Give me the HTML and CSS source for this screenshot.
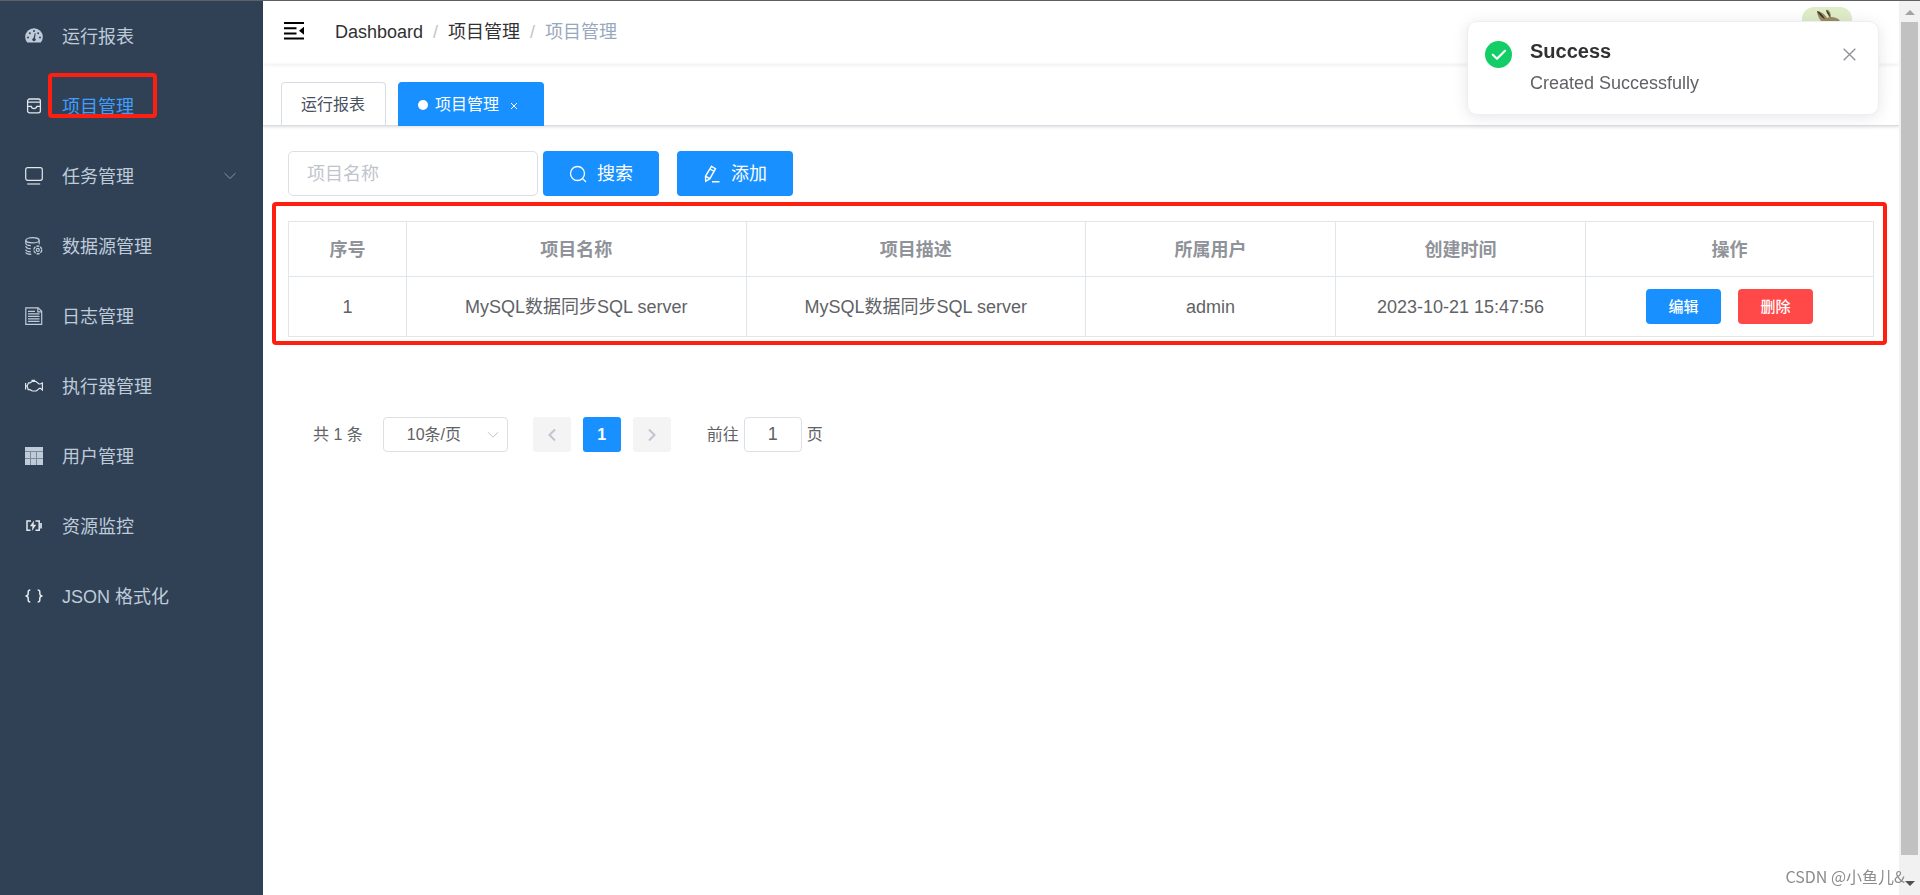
FILE: index.html
```html
<!DOCTYPE html>
<html lang="zh-CN">
<head>
<meta charset="utf-8">
<meta name="viewport" content="width=device-width, initial-scale=1">
<title>项目管理</title>
<link rel="stylesheet" href="styles.css">
</head>
<body>
<div class="app">
  <nav class="sidebar">
    <a class="menu-item" href="#">
      <svg class="menu-icon" viewBox="0 0 18 18"><path d="M2.2 15.500A8.600 8.600 0 0 1 .2 10a8.800 8.800 0 0 1 17.600 0 8.600 8.600 0 0 1-2 5.500z" fill="currentColor"/><g fill="#304156"><circle cx="3" cy="10.500" r="1"/><circle cx="4.800" cy="6.300" r="1"/><circle cx="9" cy="4" r="1"/><circle cx="13.200" cy="6.300" r="1"/><circle cx="15" cy="10.500" r="1"/><circle cx="9" cy="12.600" r="1.700"/><path d="M8.300 12l1.500-6 .9.300-.9 6z"/></g></svg>
      <span>运行报表</span>
    </a>
    <a class="menu-item active" href="#">
      <svg class="menu-icon bright" viewBox="0 0 18 18" fill="none" stroke="currentColor" stroke-width="1.300"><rect x="2.600" y="2" width="12.800" height="13.800" rx="2"/><path d="M2.600 5.200h12.800M2.600 9.300h3.600c.4 1.600 1.200 2.300 2.800 2.300s2.400-.7 2.800-2.300h3.600"/></svg>
      <span>项目管理</span>
      <i class="mark mark-menu"></i>
    </a>
    <a class="menu-item" href="#">
      <svg class="menu-icon bright" viewBox="0 0 18 18" fill="none" stroke="currentColor" stroke-width="1.200"><rect x=".7" y=".7" width="16.600" height="12.600" rx="2"/><path d="M2.200 17h13" stroke="#a2a9b5" stroke-width="1.800"/></svg>
      <span>任务管理</span>
      <svg class="menu-arrow" viewBox="0 0 12 8" fill="none" stroke="currentColor"><path d="M.6 1.200L6 6.500l5.400-5.300"/></svg>
    </a>
    <a class="menu-item" href="#">
      <svg class="menu-icon" viewBox="0 0 18 18" fill="none" stroke="currentColor" stroke-width="1.200"><ellipse cx="7.500" cy="3.300" rx="6.700" ry="2.600"/><path d="M.8 3.300v3c0 1.300 2.200 2.200 5 2.400M14.200 3.300v3.900M.8 9c0 1.700 1.700 2.600 5 2.800M.8 12.400c0 1.300 1.700 2.200 5 2.400M.8 15.200c0 1.300 2.200 2 5.500 2.100"/><circle cx="12.800" cy="12.900" r="3.900" stroke-width="1.400" stroke-dasharray="3.100 1"/><circle cx="12.800" cy="12.900" r="1.500"/></svg>
      <span>数据源管理</span>
    </a>
    <a class="menu-item" href="#">
      <svg class="menu-icon" viewBox="0 0 18 18" fill="none" stroke="currentColor" stroke-width="1.200"><path d="M.8.800h12.400l3.500 3.500v13H.8z"/><path d="M12.800.8v4h3.900M3 4.300h7M3 6.800h11.500M3 9.300h11.500M3 11.800h11.500M3 14.300h11.500"/></svg>
      <span>日志管理</span>
    </a>
    <a class="menu-item" href="#">
      <svg class="menu-icon" viewBox="0 0 18 18" fill="none" stroke="#e3e7ec" stroke-width="1.200"><path d="M.6 6v6.500M.6 9h1.500l1.500-3.200h1.500L7 4.500h4l3 2.500h1.300L17.400 6v7l-2-1.700h-1l-3 2.700H7.200L5 12.700H3.200L2.100 9M6.500 3.400h3.700"/></svg>
      <span>执行器管理</span>
    </a>
    <a class="menu-item" href="#">
      <svg class="menu-icon" viewBox="0 0 18 18"><path d="M0 0h18v18H0z" fill="#7c8a9c"/><path d="M0 0h18v4H0zM0 5h5v6H0zM6 5h5v6H6zM12 5h6v6h-6zM0 12h5v6H0zM6 12h5v6H6zM12 12h6v6h-6z" fill="currentColor"/></svg>
      <span>用户管理</span>
    </a>
    <a class="menu-item" href="#">
      <svg class="menu-icon bright" viewBox="0 0 18 18" fill="none" stroke="currentColor" stroke-width="1.500"><path d="M6 4H2v9.300h3.500M10.500 4h3.700v9.300H10.500"/><path d="M9 3.500L4.900 9.300h2.600l-.6 4.700 4.300-6.200H8.600z" fill="currentColor" stroke="none"/><path d="M16 6v5.500" stroke-width="2" stroke="#bfcbd9"/></svg>
      <span>资源监控</span>
    </a>
    <a class="menu-item" href="#">
      <svg class="menu-icon bright" viewBox="0 0 18 18" fill="none" stroke="currentColor" stroke-width="1.500"><path d="M5.300 3C3.500 3 3.200 3.700 3.200 5v1.800C3.200 8 2.300 8.800.6 9c1.700.2 2.600 1 2.600 2.200V13c0 1.300.3 2 2.100 2M12.700 3c1.800 0 2.100.7 2.100 2v1.800c0 1.200.9 2 2.600 2.200-1.700.2-2.600 1-2.600 2.200V13c0 1.300-.3 2-2.100 2"/></svg>
      <span>JSON 格式化</span>
    </a>
  </nav>

  <div class="main">
    <header class="navbar">
      <button class="hamburger" type="button" aria-label="收起菜单">
        <svg viewBox="0 0 20 18"><path d="M0 0h20v2H0zM0 5.200h12.500v2H0zM0 10.400h12.500v2H0zM0 15.600h20v2H0zM20 4.800v8L15 8.800z"/></svg>
      </button>
      <ol class="breadcrumb">
        <li><a href="#">Dashboard</a></li>
        <li><a href="#">项目管理</a></li>
        <li>项目管理</li>
      </ol>
      <svg class="avatar" viewBox="0 0 50 50"><rect width="50" height="50" rx="12" fill="#dfecc8"/><path d="M15 4c3 0 8 3 10 7l2-1L24 3c3-1 5 3 5 7 4 0 7 1 9 4v16H22V17c-4-3-7-9-7-13z" fill="#9a8b62"/><path d="M15 4c3 1 6 4 8 8l-2-1c-3-2-5-5-6-7zM24 3c2 1 4 4 4 7l-3-4z" fill="#3b342c"/></svg>
    </header>

    <div class="tabs">
      <a class="tab" href="#">运行报表</a>
      <a class="tab current" href="#"><i class="dot"></i>项目管理<svg class="tab-close" viewBox="0 0 8 8" stroke="currentColor"><path d="M1 1l6 6M7 1L1 7"/></svg></a>
    </div>

    <main class="content">
      <form class="filter">
        <input class="text-input" type="text" placeholder="项目名称" aria-label="项目名称">
        <button class="btn" type="button"><svg viewBox="0 0 18 18" fill="none" stroke="currentColor" stroke-width="1.300"><circle cx="8.500" cy="8.500" r="7"/><path d="M13.500 13.500l3.500 3.500"/></svg>搜索</button>
        <button class="btn" type="button"><svg viewBox="0 0 18 18" fill="none" stroke="currentColor" stroke-width="1.400"><path d="M8.500 1.300l4 2.400-5.600 10-4.200 2.600-.2-5.200zM7 4l4 2.400M2.800 11.300l4 2.400M9 16.700h7.500"/></svg>添加</button>
      </form>

      <div class="table-wrap">
        <table class="table">
          <colgroup><col class="col-index"><col><col><col class="col-mid"><col class="col-mid"><col class="col-actions"></colgroup>
          <thead>
            <tr><th>序号</th><th>项目名称</th><th>项目描述</th><th>所属用户</th><th>创建时间</th><th>操作</th></tr>
          </thead>
          <tbody>
            <tr>
              <td>1</td><td>MySQL数据同步SQL server</td><td>MySQL数据同步SQL server</td><td>admin</td><td>2023-10-21 15:47:56</td>
              <td><div class="actions"><button class="btn-small" type="button">编辑</button><button class="btn-small danger" type="button">删除</button></div></td>
            </tr>
          </tbody>
        </table>
        <i class="mark mark-table"></i>
      </div>

      <div class="pagination">
        <span class="total">共 1 条</span>
        <span class="size">
          <select aria-label="每页条数"><option>10条/页</option></select>
          <svg viewBox="0 0 12 8" fill="none" stroke="currentColor"><path d="M1 1.200l5 5 5-5"/></svg>
        </span>
        <div class="pager">
          <button type="button" aria-label="上一页" disabled><svg viewBox="0 0 8 14" fill="none" stroke="currentColor" stroke-width="2"><path d="M7 1.500L1.500 7 7 12.500"/></svg></button>
          <button class="current" type="button">1</button>
          <button type="button" aria-label="下一页" disabled><svg viewBox="0 0 8 14" fill="none" stroke="currentColor" stroke-width="2"><path d="M1 1.500L6.500 7 1 12.500"/></svg></button>
        </div>
        <label class="jump">前往<input type="text" value="1">页</label>
      </div>
    </main>
  </div>

  <div class="scrollbar">
    <svg class="up" viewBox="0 0 10 5"><path d="M0 5l5-5 5 5z"/></svg>
    <div class="thumb"></div>
    <svg class="down" viewBox="0 0 10 5"><path d="M0 0l5 5 5-5z"/></svg>
  </div>
</div>

<div class="notice" role="alert">
  <svg class="notice-icon" viewBox="0 0 27 27"><circle cx="13.500" cy="13.500" r="13.500" fill="#13ce66"/><path d="M7.800 13.700l4.200 4.100 8-8" fill="none" stroke="#fff" stroke-width="2.200" stroke-linecap="round" stroke-linejoin="round"/></svg>
  <div class="notice-text">
    <h2>Success</h2>
    <p>Created Successfully</p>
  </div>
  <button class="notice-close" type="button" aria-label="关闭"><svg viewBox="0 0 13 13" stroke="currentColor" stroke-width="1.400"><path d="M.7.700l11.600 11.600M12.300.7L.7 12.300"/></svg></button>
</div>
<div class="watermark">CSDN @小鱼儿&amp;</div>
</body>
</html>
```
FILE: styles.css
```css
* {
  box-sizing: border-box;
}

body {
  margin: 0;
  color: #606266;
  background: #fff;
  font: 18px/24px "Liberation Sans", "Noto Sans CJK SC", sans-serif;
}

a {
  color: inherit;
  text-decoration: none;
}

button,
input,
select {
  margin: 0;
  font: inherit;
}

button {
  padding: 0;
  border: 0;
  cursor: pointer;
}

svg {
  display: block;
  flex: none;
}

.app {
  display: flex;
  min-height: 100vh;
  border-top: 1px solid #5f5f66;
}

/* Sidebar */
.sidebar {
  flex: none;
  width: 263px;
  background: #304156;
  color: #bfcbd9;
}

.menu-item {
  position: relative;
  display: flex;
  align-items: center;
  gap: 19px;
  height: 70px;
  padding: 0 27px 0 25px;
}

.menu-item span {
  padding-top: 2px;
}

.menu-item.active {
  color: #409eff;
}

.menu-icon {
  width: 18px;
  height: 18px;
  color: #bfcbd9;
}

.menu-icon.bright {
  color: #e3e7ec;
}

.menu-arrow {
  width: 12px;
  height: 8px;
  margin-left: auto;
  color: #909399;
}

/* Red highlight frames */
.mark {
  position: absolute;
  border: 4px solid #ff1f10;
  border-radius: 4px;
  pointer-events: none;
}

.mark-menu {
  top: 2px;
  left: 48px;
  width: 109px;
  height: 45px;
}

.mark-table {
  inset: -19px -13px -8px -16px;
}

/* Header */
.main {
  flex: 1;
  min-width: 0;
}

.navbar {
  display: flex;
  align-items: flex-start;
  height: 63px;
  padding: 0 47px 0 21px;
  box-shadow: 0 1px 4px rgba(0, 21, 41, 0.08);
}

.hamburger {
  margin-top: 21px;
  background: none;
}

.hamburger svg {
  width: 20px;
  height: 18px;
}

.breadcrumb {
  display: flex;
  margin: 19px 0 0 31px;
  padding: 0;
  list-style: none;
  color: #97a8be;
}

.breadcrumb a {
  color: #303133;
}

.breadcrumb li + li::before {
  content: "/";
  margin: 0 10px;
  color: #c0c4cc;
}

.avatar {
  width: 50px;
  height: 50px;
  margin: 6px 0 0 auto;
}

/* Open page tabs */
.tabs {
  display: flex;
  align-items: flex-end;
  gap: 12px;
  height: 62px;
  padding: 0 18px;
  border-bottom: 1px solid #d8dce5;
  box-shadow: 0 1px 3px rgba(0, 0, 0, 0.14);
}

.tab {
  display: flex;
  align-items: center;
  height: 43px;
  padding: 1px 20px 0 19px;
  border: 1px solid #d8dce5;
  border-bottom: 0;
  border-radius: 4px 4px 0 0;
  color: #495060;
  font-size: 16px;
}

.tab.current {
  height: 44px;
  margin-bottom: -1px;
  padding-right: 25px;
  border-color: #1890ff;
  background: #1890ff;
  color: #fff;
}

.dot {
  width: 10px;
  height: 10px;
  margin-right: 7px;
  border-radius: 50%;
  background: #fff;
}

.tab-close {
  width: 8px;
  height: 8px;
  margin: 2px 0 0 11px;
}

/* Filter row */
.content {
  padding: 25px;
}

.filter {
  display: flex;
}

.text-input {
  width: 250px;
  height: 45px;
  margin-right: 5px;
  padding: 1px 18px 0;
  border: 1px solid #dcdfe6;
  border-radius: 5px;
  background: #fff;
  color: #606266;
}

.text-input::placeholder {
  color: #c0c4cc;
}

.btn {
  display: flex;
  align-items: center;
  justify-content: center;
  gap: 10px;
  width: 116px;
  height: 45px;
  border-radius: 4px;
  background: #1890ff;
  color: #fff;
}

.btn + .btn {
  margin-left: 18px;
}

.btn svg {
  width: 18px;
  height: 18px;
}

/* Table */
.table-wrap {
  position: relative;
  margin-top: 25px;
}

.table {
  width: 100%;
  border-collapse: collapse;
  table-layout: fixed;
  text-align: center;
}

.col-index {
  width: 118px;
}

.col-mid {
  width: 250px;
}

.col-actions {
  width: 288px;
}

.table th,
.table td {
  padding: 0;
  border: 1px solid #dfe6ec;
}

.table th {
  height: 55px;
  padding-top: 1px;
  color: #909399;
  font-weight: 700;
}

.table td {
  height: 60px;
}

.actions {
  display: flex;
  justify-content: center;
  gap: 17px;
}

.btn-small {
  width: 75px;
  height: 35px;
  border-radius: 4px;
  background: #1890ff;
  color: #fff;
  font-size: 15px;
  font-weight: 500;
}

.btn-small.danger {
  background: #ff4949;
}

/* Pagination */
.pagination {
  display: flex;
  align-items: center;
  margin-top: 80px;
  padding-left: 25px;
  font-size: 16px;
}

.size {
  position: relative;
  margin: 0 25px 0 20px;
}

.size select {
  display: block;
  width: 125px;
  height: 35px;
  padding: 0 23px;
  border: 1px solid #dcdfe6;
  border-radius: 4px;
  appearance: none;
  background: #fff;
  color: #606266;
}

.size svg {
  position: absolute;
  top: 14px;
  right: 9px;
  width: 12px;
  height: 8px;
  color: #c0c4cc;
  pointer-events: none;
}

.pager {
  display: flex;
  gap: 12px;
}

.pager button {
  display: flex;
  align-items: center;
  justify-content: center;
  width: 38px;
  height: 35px;
  border-radius: 3px;
  background: #f4f4f5;
  color: #c0c4cc;
  font-weight: 700;
}

.pager button.current {
  background: #1890ff;
  color: #fff;
}

.pager svg {
  width: 8px;
  height: 14px;
}

.jump {
  display: flex;
  align-items: center;
  gap: 5px;
  margin-left: 36px;
}

.jump input {
  width: 58px;
  height: 35px;
  padding: 0;
  border: 1px solid #dcdfe6;
  border-radius: 4px;
  color: #606266;
  font-size: 18px;
  text-align: center;
}

/* Scrollbar */
.scrollbar {
  display: flex;
  flex: none;
  flex-direction: column;
  align-items: center;
  gap: 7px;
  width: 21px;
  padding: 9px 0;
  background: #f1f1f1;
}

.scrollbar svg {
  width: 10px;
  height: 5px;
  fill: #a3a3a3;
}

.scrollbar .down {
  margin-top: 19px;
  fill: #505050;
}

.thumb {
  flex: 1;
  width: 17px;
  background: #c1c1c1;
}

/* Notification */
.notice {
  position: fixed;
  top: 21px;
  right: 41px;
  display: flex;
  align-items: flex-start;
  width: 412px;
  padding: 16px 22px 19px 17px;
  border: 1px solid #ebeef5;
  border-radius: 10px;
  background: #fff;
  box-shadow: 0 2px 15px rgba(0, 0, 0, 0.1);
}

.notice-icon {
  width: 27px;
  height: 27px;
  margin-top: 3px;
}

.notice-text {
  flex: 1;
  margin-left: 18px;
}

.notice-text h2 {
  margin: 0;
  color: #303133;
  font-size: 20px;
  line-height: 26px;
}

.notice-text p {
  margin: 7px 0 0;
}

.notice-close {
  margin-top: 10px;
  background: none;
  color: #909399;
}

.notice-close svg {
  width: 13px;
  height: 13px;
}

.watermark {
  position: fixed;
  right: 15px;
  bottom: 7px;
  color: #8c8c8c;
  font-family: "Noto Sans CJK SC", sans-serif;
  font-size: 16px;
}
```
